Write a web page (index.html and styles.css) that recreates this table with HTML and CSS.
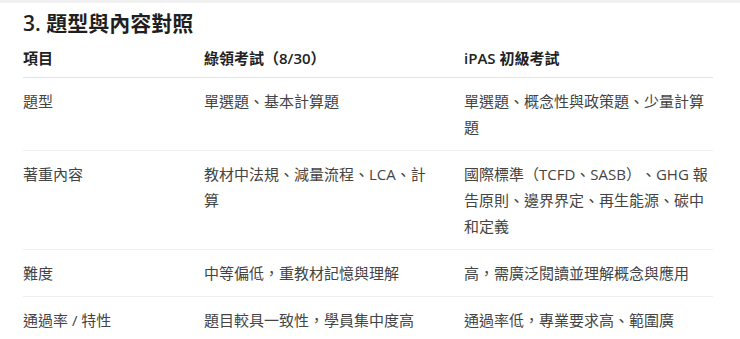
FILE: index.html
```html
<!DOCTYPE html>
<html lang="zh-Hant">
<head>
<meta charset="utf-8">
<link rel="stylesheet" href="styles.css">
</head>
<body>
<div class="topbar"></div>
<section class="section">
  <h3 class="title">3. 題型與內容對照</h3>
  <div class="table">
    <div class="row head">
      <div class="cell">項目</div>
      <div class="cell">綠領考試（8/30）</div>
      <div class="cell">iPAS 初級考試</div>
    </div>
    <div class="row">
      <div class="cell">題型</div>
      <div class="cell">單選題、基本計算題</div>
      <div class="cell">單選題、概念性與政策題、少量計算題</div>
    </div>
    <div class="row">
      <div class="cell">著重內容</div>
      <div class="cell">教材中法規、減量流程、LCA、計算</div>
      <div class="cell">國際標準（TCFD、SASB）、GHG 報告原則、邊界界定、再生能源、碳中和定義</div>
    </div>
    <div class="row">
      <div class="cell">難度</div>
      <div class="cell">中等偏低，重教材記憶與理解</div>
      <div class="cell">高，需廣泛閱讀並理解概念與應用</div>
    </div>
    <div class="row last">
      <div class="cell">通過率 / 特性</div>
      <div class="cell">題目較具一致性，學員集中度高</div>
      <div class="cell">通過率低，專業要求高、範圍廣</div>
    </div>
  </div>
</section>
</body>
</html>
```

FILE: styles.css
```css
html, body {
  margin: 0;
  padding: 0;
  background: #ffffff;
}
body {
  font-family: "Open Sans", "Noto Sans CJK TC", sans-serif;
  color: #444444;
  overflow: hidden;
  text-spacing-trim: space-all;
}
.topbar {
  height: 3px;
  background: #f1f1f1;
}
.section {
  padding: 0 0 0 23px;
  width: 690px;
}
.title {
  margin: 6px 0 0 0;
  font-size: 21px;
  line-height: 28px;
  font-weight: 600;
  color: #1f1f1f;
}
.table {
  display: flex;
  flex-direction: column;
}
.row {
  display: grid;
  grid-template-columns: 181px 260px 1fr;
  border-bottom: 1px solid #efefef;
  padding: 10px 0;
}
.row.head {
  padding: 8px 0 6px 0;
  border-bottom: 1px solid #e4e4e4;
}
.row.last {
  border-bottom: none;
}
.cell {
  font-size: 15px;
  line-height: 26px;
  padding-right: 24px;
}
.cell:last-child {
  padding-right: 0;
}
.head .cell {
  font-weight: 600;
  color: #222222;
}
```
